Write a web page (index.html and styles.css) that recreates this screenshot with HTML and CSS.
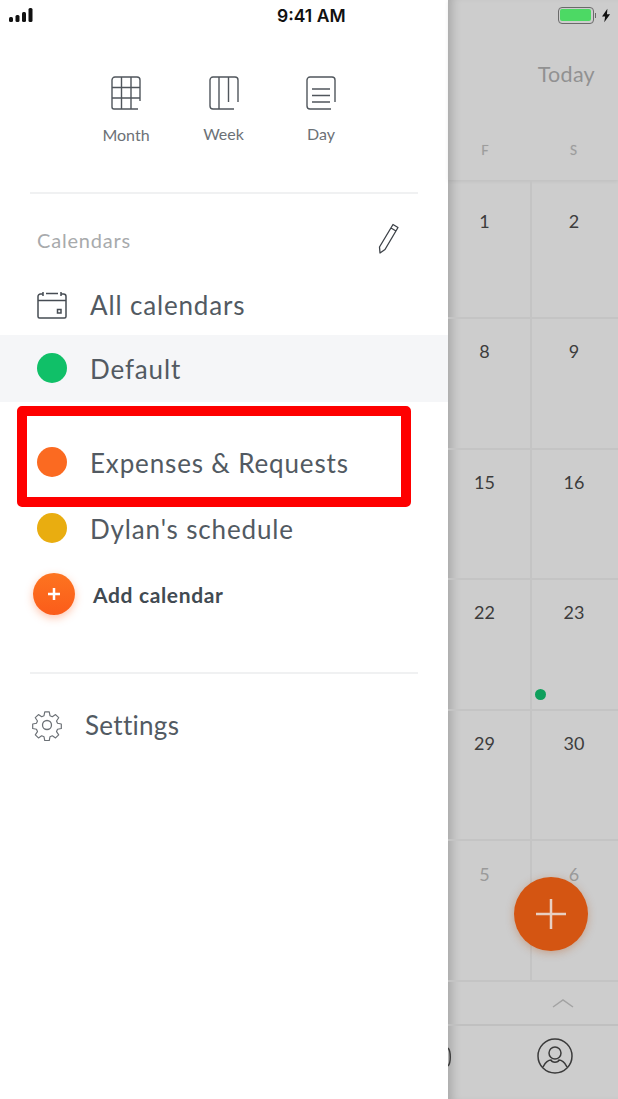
FILE: index.html
```html
<!DOCTYPE html>
<html lang="en">
<head>
<meta charset="utf-8">
<title>Calendars</title>
<link rel="stylesheet" href="styles.css">
</head>
<body>
<div class="phone">
  <aside class="drawer">
    <nav class="views">
      <div class="view view-month">
        <svg class="view-icon" viewBox="0 0 30 34" width="30" height="34"><path d="M29 25V4a3 3 0 0 0-3-3H4a3 3 0 0 0-3 3v27a2 2 0 0 0 2 2h24M1 11.500h28M1 22h28M10.500 1v32M20 1v32"/></svg>
        <span>Month</span>
      </div>
      <div class="view">
        <svg class="view-icon" viewBox="0 0 30 34" width="30" height="34"><path d="M29 26V4a3 3 0 0 0-3-3H4a3 3 0 0 0-3 3v26a3 3 0 0 0 3 3h21M10 1v32M19.500 1v25"/></svg>
        <span>Week</span>
      </div>
      <div class="view">
        <svg class="view-icon" viewBox="0 0 30 34" width="30" height="34"><path d="M29 26V4a3 3 0 0 0-3-3H4a3 3 0 0 0-3 3v26a3 3 0 0 0 3 3h21M6 13h18M6 19.500h18M6 26h18"/></svg>
        <span>Day</span>
      </div>
    </nav>
    <hr class="rule">
    <div class="cal-head">
      <span>Calendars</span>
      <svg viewBox="0 0 24 32" width="24" height="32" class="pencil"><path d="M18 2.500l5 3-13 22-5 3.500-.5-6zM16 6l5 3"/></svg>
    </div>
    <ul class="cal-list">
      <li class="cal-row cal-all">
        <svg viewBox="0 0 30 28" width="30" height="28" class="cal-icon"><path d="M6 3H3.500A2.500 2.500 0 0 0 1 5.500v20A1.500 1.500 0 0 0 2.500 27h25a1.500 1.500 0 0 0 1.500-1.500v-20A2.500 2.500 0 0 0 26.500 3H24M9 2.500h12M6 1v4M24 1v4M1 9.500h28"/><rect x="20.500" y="18.500" width="3.500" height="3.500"/></svg>
        <span>All calendars</span>
      </li>
      <li class="cal-row cal-default"><i class="dot dot-green"></i><span>Default</span></li>
      <li class="cal-row cal-expenses"><i class="dot dot-orange"></i><span>Expenses &amp; Requests</span></li>
      <li class="cal-row cal-dylan"><i class="dot dot-yellow"></i><span>Dylan's schedule</span></li>
    </ul>
    <div class="add-row">
      <span class="add-btn"><svg viewBox="0 0 14 14" width="14" height="14"><path d="M7 1v12M1 7h12"/></svg></span>
      <span class="add-label">Add calendar</span>
    </div>
    <hr class="rule rule-lower">
    <div class="settings">
      <svg viewBox="0 0 32 32" width="32" height="32" class="gear"><path d="M13.500 1.500h5l.8 4.200 2.600 1.100 3.600-2.400 3.500 3.500-2.400 3.600 1.100 2.600 4.200.8v5l-4.200.8-1.100 2.600 2.400 3.600-3.500 3.500-3.600-2.400-2.600 1.100-.8 4.200h-5l-.8-4.200-2.600-1.100-3.600 2.400-3.500-3.500 2.400-3.600-1.100-2.600-4.200-.8v-5l4.200-.8 1.100-2.600-2.400-3.600 3.500-3.500 3.600 2.400 2.600-1.100z" transform="translate(1.600 1.600) scale(.9)"/><circle cx="16" cy="16" r="4.500"/></svg>
      <span>Settings</span>
    </div>
  </aside>

  <main class="calendar">
    <div class="cal-top">
      <div class="today">Today</div>
      <div class="weekdays"><span>F</span><span>S</span></div>
    </div>
    <div class="grid">
      <div class="day"><b>1</b></div><div class="day"><b>2</b></div>
      <div class="day"><b>8</b></div><div class="day"><b>9</b></div>
      <div class="day"><b>15</b></div><div class="day"><b>16</b></div>
      <div class="day"><b>22</b><i class="event"></i></div><div class="day"><b>23</b></div>
      <div class="day"><b>29</b></div><div class="day"><b>30</b></div>
      <div class="day day-tall muted"><b>5</b></div><div class="day day-tall muted"><b>6</b></div>
    </div>
    <div class="collapse"><svg viewBox="0 0 22 10" width="22" height="10"><path d="M1 9l10-7 10 7"/></svg></div>
    <div class="tabbar">
      <svg viewBox="0 0 4 20" width="4" height="20" class="clipped"><path d="M0 1c3 3 3 15 0 18"/></svg>
      <svg viewBox="0 0 36 36" width="36" height="36" class="profile"><circle cx="18" cy="18" r="17"/><circle cx="18" cy="15" r="6"/><path d="M6 29c2-5 6-7 8-7 1 3 7 3 8 0 2 0 6 2 8 7"/></svg>
    </div>
    <button class="fab" aria-label="Add"><svg viewBox="0 0 30 30" width="30" height="30"><path d="M15 0v30M0 15h30"/></svg></button>
  </main>

  <div class="status">
    <svg class="signal" viewBox="0 0 24 15" width="24" height="15"><rect x="0" y="9" width="4" height="5" rx="1.500"/><rect x="6.500" y="7" width="4" height="7" rx="1.500"/><rect x="13" y="4" width="4" height="10" rx="1.500"/><rect x="19.500" y="0" width="4" height="14" rx="1.500"/></svg>
    <span class="clock">9:41 AM</span>
    <span class="battery"><i class="battery-body"><i class="battery-fill"></i></i><i class="battery-tip"></i>
      <svg viewBox="0 0 10 15" width="9" height="15"><path d="M6 0L0 8.500h3.500L2.500 15 9 6H5.500z"/></svg>
    </span>
  </div>
  <div class="highlight"></div>
</div>
</body>
</html>
```

FILE: styles.css
```css
* { box-sizing: border-box; }
html, body { margin: 0; padding: 0; }
body { font-family: "Lato", "Liberation Sans", sans-serif; background: #fff; }
.phone { position: relative; display: flex; width: 618px; height: 1099px; overflow: hidden; }

.drawer { width: 448px; flex: none; background: #fff; display: flex; flex-direction: column; padding-top: 76px; color: #49525b; }
.views { display: flex; gap: 37.500px; height: 116px; padding-left: 96px; flex: none; }
.view { width: 60px; display: flex; flex-direction: column; align-items: center; gap: 14px; font-size: 16px; color: #6c7176; }
.view-month { gap: 15px; }
.view-icon { fill: none; stroke: #50565c; stroke-width: 1.400; }
.rule { border: 0; height: 2px; background: #f0f1f2; margin: 0 30px; flex: none; }
.cal-head { display: flex; justify-content: space-between; align-items: center; height: 86px; padding: 10px 49px 4px 37px; font-size: 20px; color: #a8aaac; letter-spacing: .8px; flex: none; }
.pencil { fill: none; stroke: #3c4147; stroke-width: 1.300; stroke-linejoin: round; margin-top: -4px; }
.cal-list { list-style: none; margin: 0; padding: 0; font-size: 26px; letter-spacing: .85px; color: #525a62; }
.cal-row { display: flex; align-items: center; gap: 23px; padding-left: 37px; height: 66px; }
.cal-row span { padding-top: 1px; }
.cal-all { height: 55px; padding-bottom: 5px; }
.cal-all span { padding-top: 0; }
.cal-default { background: #f5f6f8; height: 67px; }
.cal-expenses { height: 65px; margin-top: 28px; }
.cal-dylan { height: 67px; }
.cal-icon { fill: none; stroke: #464c53; stroke-width: 1.500; flex: none; }
.dot { width: 30px; height: 30px; border-radius: 50%; flex: none; margin-bottom: 1px; }
.dot-green { background: #10c068; }
.dot-orange { background: #fb6a21; }
.dot-yellow { background: #e9ad10; }
.add-row { display: flex; align-items: center; gap: 18px; padding-left: 33px; margin-top: 11px; height: 42px; flex: none; }
.add-btn { width: 42px; height: 42px; border-radius: 50%; background: linear-gradient(#fd7420, #fb5c1a); box-shadow: 0 3px 9px rgba(251, 92, 26, .35); display: flex; align-items: center; justify-content: center; flex: none; }
.add-btn svg { fill: none; stroke: #fff; stroke-width: 2.500; }
.add-label { font-size: 21px; font-weight: 700; color: #414a52; letter-spacing: .65px; }
.rule-lower { margin-top: 57px; }
.settings { display: flex; align-items: center; gap: 22px; padding-left: 31px; margin-top: 35px; font-size: 26px; letter-spacing: .3px; color: #525a62; }
.gear { fill: none; stroke: #6c7176; stroke-width: 1.300; stroke-linejoin: round; flex: none; }

.calendar { position: relative; flex: 1; background: #cdcdcd; box-shadow: inset 10px 0 10px -6px rgba(0, 0, 0, .18); display: flex; flex-direction: column; }
.cal-top { height: 180px; box-shadow: 0 1px 4px rgba(0, 0, 0, .08); display: flex; flex-direction: column; flex: none; }
.today { margin-top: 61px; height: 39px; padding-right: 23px; text-align: right; font-size: 21.500px; color: #919191; letter-spacing: .3px; }
.weekdays { display: grid; grid-template-columns: 84px 86px; margin-top: 42px; font-size: 13px; color: #9d9d9d; text-align: center; text-shadow: 0 0 1px #b5b5b5; }
.weekdays span:first-child { padding-right: 10px; }
.weekdays span:last-child { padding-right: 3px; }
.grid { display: grid; grid-template-columns: 84px 86px; grid-template-rows: 139px repeat(4, 130.500px) 141px; flex: none; }
.day { position: relative; border-bottom: 2px solid #c4c4c4; text-align: center; padding-top: 30px; font-size: 18px; color: #3c3c3c; }
.day:nth-child(odd) { border-right: 2px solid #c4c4c4; }
.day b { font-weight: 400; display: block; padding-right: 9px; }
.day:nth-child(even) b { padding-right: 2px; }
.day:nth-child(n+3) { padding-top: 21px; }
.muted { color: #9a9a9a; }
.day.day-tall { padding-top: 22px; }
.event { position: absolute; top: 109px; left: 87px; width: 11px; height: 11px; border-radius: 50%; background: #0f9f5c; }
.collapse { height: 44px; display: flex; align-items: flex-start; justify-content: flex-end; padding: 16px 44px 0 0; border-bottom: 2px solid #c0c0c0; flex: none; }
.collapse svg { fill: none; stroke: #a3a3a3; stroke-width: 1.500; }
.tabbar { flex: 1; display: flex; justify-content: space-between; align-items: flex-start; padding: 12px 45px 0 0; }
.clipped { fill: none; stroke: #3b3b3b; stroke-width: 1.500; margin-top: 9px; }
.profile { fill: none; stroke: #3b3b3b; stroke-width: 1.500; }
.fab { position: absolute; left: 66px; top: 877px; width: 74px; height: 74px; border: 0; border-radius: 50%; background: #d45512; box-shadow: 0 2px 8px rgba(180, 80, 20, .35); display: flex; align-items: center; justify-content: center; padding: 0; }
.fab svg { fill: none; stroke: #e8cfc2; stroke-width: 2.500; }

.status { position: absolute; left: 0; top: 0; width: 618px; height: 30px; display: flex; align-items: center; justify-content: space-between; padding: 0 7px 0 9px; }
.signal { fill: #111; }
.clock { position: absolute; left: 277px; top: 6px; font: 600 17.500px/20px "Inter", "Liberation Sans", sans-serif; color: #111; }
.battery { display: flex; align-items: center; gap: 2px; }
.battery-body { width: 36px; height: 17px; border: 1.500px solid #6a6a6a; border-radius: 4px; padding: 1.500px; display: block; }
.battery-fill { display: block; height: 100%; background: #4cd964; border-radius: 2px; }
.battery-tip { width: 1.500px; height: 5px; background: #6a6a6a; margin-right: 4px; margin-left: -1px; }
.battery svg { fill: #111; }

.highlight { position: absolute; left: 17px; top: 406px; width: 394px; height: 101px; border: 10px solid #fe0000; border-radius: 5px; }
```
